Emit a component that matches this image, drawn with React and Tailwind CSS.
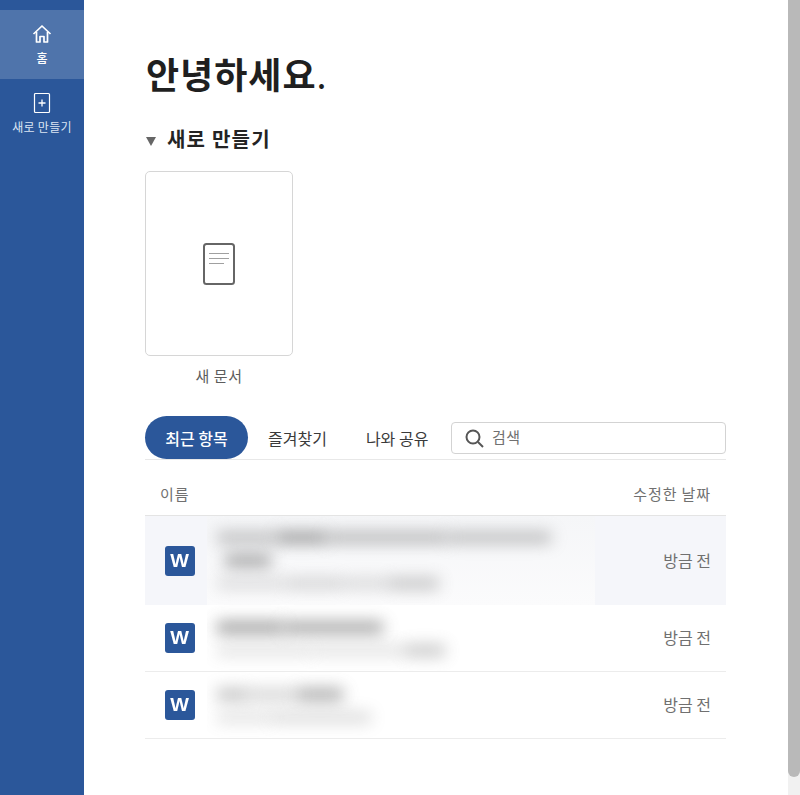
const rows = [
  {
    tall: true,
    lines: [
      [
        { w: 60, o: 0.5 },
        { w: 50, o: 0.8 },
        { w: 120, o: 0.55 },
        { w: 104, o: 0.5 },
      ],
      [{ w: 46, o: 0.75, ml: 8 }],
      [
        { w: 70, o: 0.25 },
        { w: 56, o: 0.32 },
        { w: 46, o: 0.28 },
        { w: 50, o: 0.45 },
      ],
    ],
  },
  {
    lines: [
      [
        { w: 66, o: 0.8 },
        { w: 100, o: 0.75 },
      ],
      [
        { w: 94, o: 0.22 },
        { w: 94, o: 0.22 },
        { w: 40, o: 0.45 },
      ],
    ],
  },
  {
    lines: [
      [
        { w: 30, o: 0.5 },
        { w: 50, o: 0.35 },
        { w: 46, o: 0.7 },
      ],
      [
        { w: 54, o: 0.22 },
        { w: 100, o: 0.28 },
      ],
    ],
  },
];

const BlurredName = ({ lines, tall }) => (
  <div
    className={`w-[388px] self-stretch overflow-hidden flex flex-col justify-center gap-[12px] pl-[10px] ${
      tall ? "bg-gradient-to-b from-[#f5f6f8] to-[#fbfbfc]" : "bg-white pt-[2px]"
    }`}
  >
    {lines.map((line, i) => (
      <div key={i} className="flex">
        {line.map((b, j) => (
          <div
            key={j}
            className="h-[11px] bg-[#777777] blur-[8px]"
            style={{ width: b.w, opacity: b.o, marginLeft: b.ml || 0 }}
          />
        ))}
      </div>
    ))}
  </div>
);

const WordIcon = () => (
  <div className="w-[30px] h-[30px] rounded-[3px] bg-[#2b579a] flex items-center justify-center text-white text-[18px] font-bold leading-none font-['Liberation_Sans',sans-serif]">
    <span className="scale-x-110 -ml-px">W</span>
  </div>
);

export default function App() {
  return (
    <div className="h-[795px] flex overflow-hidden bg-white font-['Noto_Sans_CJK_KR','Noto_Sans',sans-serif]">
      <aside className="w-[84px] shrink-0 bg-[#2b579a] pt-[10px] text-white">
        <div className="h-[69px] bg-[#4f74ab] flex flex-col items-center pt-[14px]">
          <svg width="20" height="20" viewBox="0 0 20 20" fill="none" stroke="currentColor" strokeWidth="1.7" strokeLinejoin="round">
            <path d="M1.5 10 10 2l8.5 8" />
            <path d="M4.5 8v10h3.5v-5.5h4V18h3.5V8" />
          </svg>
          <span className="text-[12px] leading-[16px] mt-[6px] font-medium">홈</span>
        </div>
        <div className="h-[69px] flex flex-col items-center pt-[13px]">
          <svg width="18" height="22" viewBox="0 0 18 22" fill="none" stroke="currentColor">
            <rect x="1.5" y="1.5" width="15" height="19" rx="1" strokeWidth="1.2" />
            <path d="M9 7.5v7M5.5 11h7" strokeWidth="1.3" />
          </svg>
          <span className="text-[12px] leading-[16px] mt-[5px] whitespace-nowrap text-[#dbe5f3] tracking-[0.3px]">새로 만들기</span>
        </div>
      </aside>

      <main className="flex-1 pl-[61px] pr-[62px]">
        <h1 className="mt-[49px] text-[36px] leading-[48px] font-bold text-[#1f1f1f] tracking-[1px] pl-px">
          안녕하세요<span className="font-normal">.</span>
        </h1>

        <div className="mt-[27px] flex items-center h-[30px]">
          <span className="w-0 h-0 border-x-[5px] border-x-transparent border-t-[9px] border-t-[#666666] mt-[4px] ml-px" />
          <h2 className="ml-[11px] text-[20px] leading-[30px] font-bold text-[#242424] tracking-[1.2px]">새로 만들기</h2>
        </div>

        <div className="mt-[17px] w-[148px]">
          <div className="h-[185px] border border-[#d6d6d6] rounded-[5px] flex items-center justify-center">
            <svg width="32" height="42" viewBox="0 0 32 42" fill="none">
              <rect x="1" y="1" width="30" height="40" rx="2.5" stroke="#666666" strokeWidth="2" />
              <path d="M6 10.5h20M6 15.5h20M6 20.5h15" stroke="#a0a0a0" strokeWidth="1" />
            </svg>
          </div>
          <p className="mt-[9px] text-center text-[15px] leading-[22px] text-[#5c5c5c] tracking-[0.6px]">새 문서</p>
        </div>

        <div className="mt-[29px] h-[44px] flex items-start border-b border-[#e8e8e8]">
          <button className="w-[103px] h-[43px] shrink-0 rounded-full bg-[#2b579a] text-white text-[16px] font-medium whitespace-nowrap">최근 항목</button>
          <button className="ml-[20px] h-[44px] shrink-0 text-[16px] text-[#3a3a3a] whitespace-nowrap">즐겨찾기</button>
          <button className="ml-[39px] h-[44px] shrink-0 text-[16px] text-[#3a3a3a] whitespace-nowrap">나와 공유</button>
          <div className="ml-auto mt-[6px] w-[275px] h-[32px] shrink-0 border border-[#d3d3d3] rounded-[4px] flex items-center pl-[13px]">
            <svg width="19" height="19" viewBox="0 0 19 19" fill="none" stroke="#555555" strokeWidth="2">
              <circle cx="8" cy="8" r="6.5" />
              <path d="m13 13 5 5" />
            </svg>
            <span className="ml-[8px] text-[15px] text-[#707070] tracking-[0.5px] -mt-[2px]">검색</span>
          </div>
        </div>

        <div className="h-[56px] flex items-center justify-between px-[15px] pt-[14px] pb-0 border-b border-[#e4e4e4] text-[15px] text-[#707070] tracking-[0.9px]">
          <span>이름</span>
          <span>수정한 날짜</span>
        </div>

        {rows.map((row, i) => (
          <div
            key={i}
            className={`flex items-center ${row.tall ? "h-[89px] bg-[#f5f6fa]" : "h-[67px] border-b border-[#ececec]"}`}
          >
            <div className="w-[62px] shrink-0 pl-[20px]">
              <WordIcon />
            </div>
            <BlurredName lines={row.lines} tall={row.tall} />
            <span className="ml-auto pr-[15px] text-[16px] text-[#707070] -mt-[2px]">방금 전</span>
          </div>
        ))}
      </main>

      <div className="w-[12px] shrink-0 h-full bg-[#f1f1f1]">
        <div className="h-[777px] bg-[#b9b9b9] rounded-b-[6px]" />
      </div>
    </div>
  );
}
